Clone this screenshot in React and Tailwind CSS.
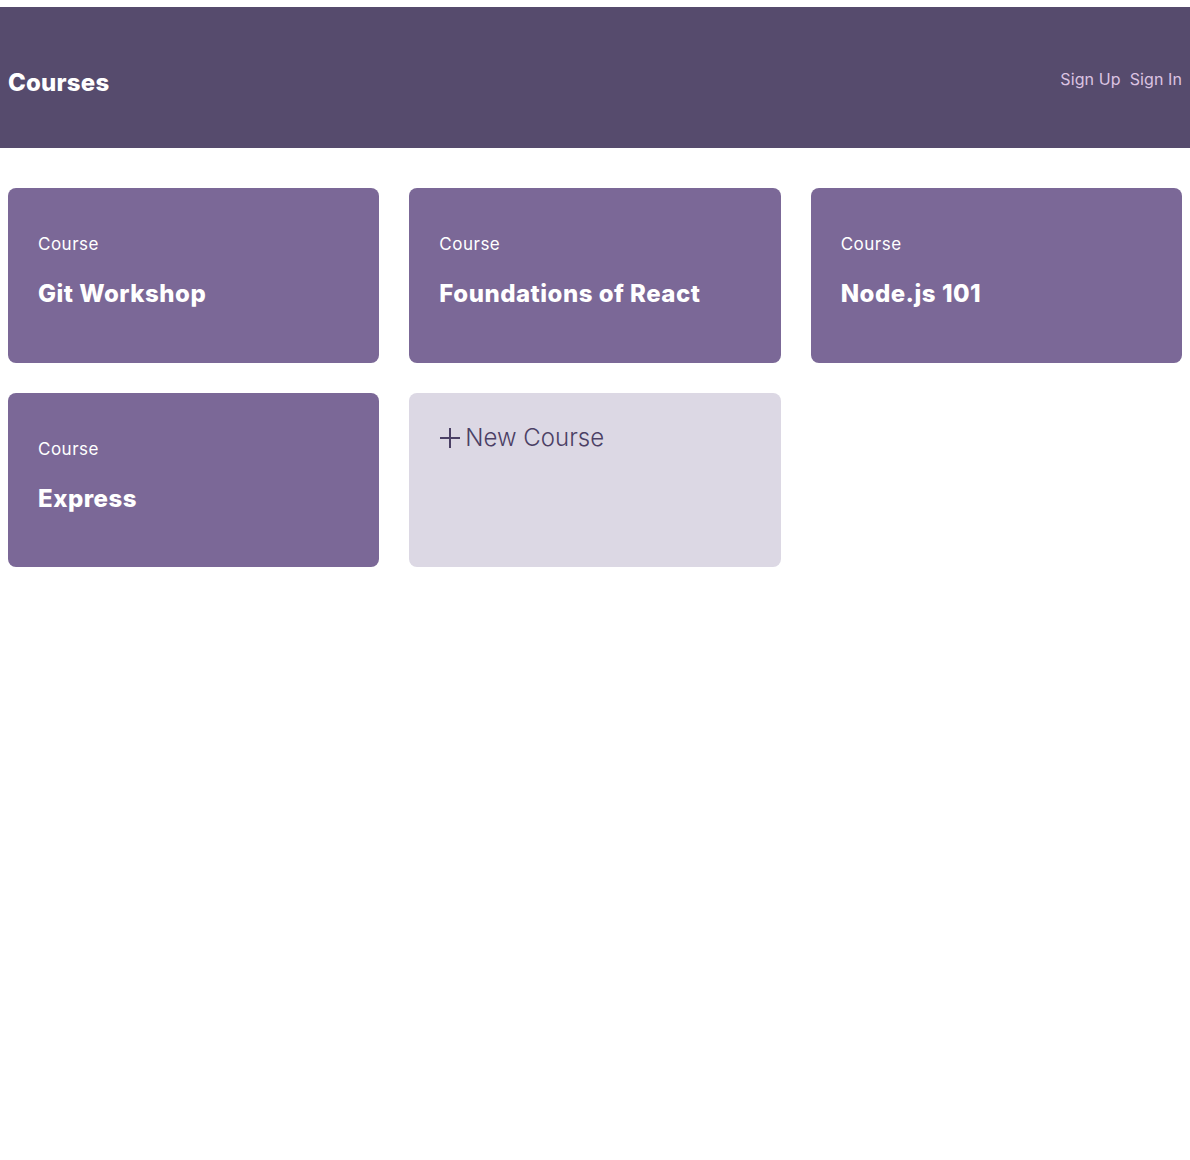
export default function App() {
  const courses = ["Git Workshop", "Foundations of React", "Node.js 101", "Express"];
  return (
    <div className="min-h-screen bg-white pt-[7px]" style={{ fontFamily: "Inter, 'Open Sans', sans-serif" }}>
      <header className="flex h-[141px] items-center justify-between bg-[#564b6d] px-2">
        <h1 className="mt-[11px] text-[24px] font-extrabold tracking-[0.2px] text-white">Courses</h1>
        <nav className="mt-[2px] flex gap-[9px] text-[16px] tracking-[0.1px] text-[#dcc3e2]">
          <a>Sign Up</a>
          <a>Sign In</a>
        </nav>
      </header>
      <main className="mt-10 grid grid-cols-3 grid-rows-[175px_174px] gap-x-[30px] gap-y-[30px] px-2">
        {courses.map((c) => (
          <div key={c} className="rounded-[8px] bg-[#7b6897] px-[30px] pt-[44px]">
            <div className="text-[17px] leading-[24px] tracking-[0.5px] text-white">Course</div>
            <div className="mt-[24px] text-[24px] font-extrabold leading-[28px] tracking-[0.5px] text-white">{c}</div>
          </div>
        ))}
        <div className="flex items-start rounded-[8px] bg-[#dcd8e4] px-[30px] pt-[27px]">
          <div className="flex items-center gap-[4px] text-[24px] font-light text-[#4b4065]">
            <svg width="22" height="22" viewBox="0 0 22 22" className="shrink-0">
              <path d="M11 1v20M1 11h20" stroke="#4b4065" strokeWidth="2" fill="none" />
            </svg>
            <span>New Course</span>
          </div>
        </div>
      </main>
    </div>
  );
}
